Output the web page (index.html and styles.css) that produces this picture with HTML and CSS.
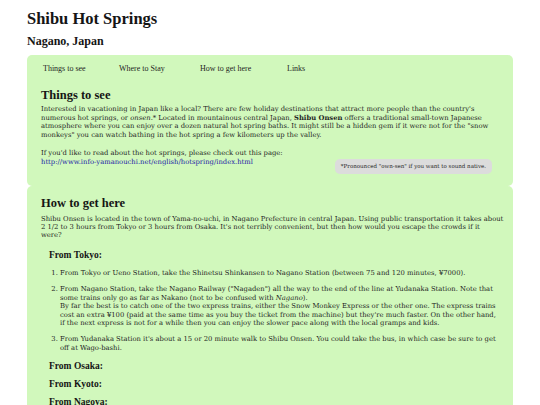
FILE: index.html
```html
<!DOCTYPE html>
<html lang="en">
<head>
<meta charset="utf-8">
<title>Shibu Hot Springs</title>
<link rel="stylesheet" href="styles.css">
</head>
<body>
<header class="page-head">
  <h1 class="title">Shibu Hot Springs</h1>
  <h2 class="subtitle">Nagano, Japan</h2>
</header>
<main class="content">
  <section class="card card-first">
    <nav class="nav">
      <a class="nav-item">Things to see</a>
      <a class="nav-item">Where to Stay</a>
      <a class="nav-item">How to get here</a>
      <a class="nav-item">Links</a>
    </nav>
    <h3 class="card-title">Things to see</h3>
    <p class="text">Interested in vacationing in Japan like a local? There are few holiday destinations that attract more people than the country's numerous hot springs, or <em>onsen</em>.* Located in mountainous central Japan, <strong>Shibu Onsen</strong> offers a traditional small-town Japanese atmosphere where you can enjoy over a dozen natural hot spring baths. It might still be a hidden gem if it were not for the "snow monkeys" you can watch bathing in the hot spring a few kilometers up the valley.</p>
    <div class="link-row">
      <p class="text">If you'd like to read about the hot springs, please check out this page:<br><a class="link" href="#">http://www.info-yamanouchi.net/english/hotspring/index.html</a></p>
      <aside class="note">*Pronounced "own-sen" if you want to sound native.</aside>
    </div>
  </section>
  <section class="card card-second">
    <h3 class="card-title">How to get here</h3>
    <p class="text intro">Shibu Onsen is located in the town of Yama-no-uchi, in Nagano Prefecture in central Japan. Using public transportation it takes about<br>2 1/2 to 3 hours from Tokyo or 3 hours from Osaka. It's not terribly convenient, but then how would you escape the crowds if it<br>were?</p>
    <h4 class="from">From Tokyo:</h4>
    <ol class="steps">
      <li>From Tokyo or Ueno Station, take the Shinetsu Shinkansen to Nagano Station (between 75 and 120 minutes, ¥7000).</li>
      <li>From Nagano Station, take the Nagano Railway ("Nagaden") all the way to the end of the line at Yudanaka Station. Note that some trains only go as far as Nakano (not to be confused with <em>Nagano</em>).<br>By far the best is to catch one of the two express trains, either the Snow Monkey Express or the other one. The express trains cost an extra ¥100 (paid at the same time as you buy the ticket from the machine) but they're much faster. On the other hand, if the next express is not for a while then you can enjoy the slower pace along with the local gramps and kids.</li>
      <li>From Yudanaka Station it's about a 15 or 20 minute walk to Shibu Onsen. You could take the bus, in which case be sure to get off at Wago-bashi.</li>
    </ol>
    <h4 class="from">From Osaka:</h4>
    <h4 class="from">From Kyoto:</h4>
    <h4 class="from">From Nagoya:</h4>
  </section>
</main>
</body>
</html>
```

FILE: styles.css
```css
html, body {
  margin: 0;
  padding: 0;
  background: #ffffff;
}
body {
  font-family: "DejaVu Serif", serif;
  color: #1e1e1e;
  padding: 9px 27px 0 27px;
}
.page-head {
  display: flex;
  flex-direction: column;
}
.title {
  margin: 0;
  font-family: "Liberation Serif", serif;
  font-size: 16.5px;
  line-height: 20px;
  font-weight: bold;
  color: #151515;
}
.subtitle {
  margin: 4px 0 0 0;
  font-family: "Liberation Serif", serif;
  font-size: 12px;
  line-height: 16px;
  font-weight: bold;
  color: #151515;
}
.content {
  margin-top: 6px;
  width: 486px;
}
.card {
  background: #d1f8bc;
  border-radius: 5px;
  padding: 0 14px 0 14px;
}
.card-first {
  padding-top: 8px;
  padding-bottom: 12px;
}
.card-second {
  padding-top: 9px;
  padding-bottom: 10px;
}
.nav {
  display: flex;
  padding-left: 2px;
  font-family: "Liberation Serif", serif;
  font-size: 8px;
  line-height: 12px;
}
.nav-item {
  color: #1e1e1e;
  text-decoration: none;
}
.nav-item:nth-child(1) { width: 76px; }
.nav-item:nth-child(2) { width: 81px; }
.nav-item:nth-child(3) { width: 87px; }
.card-title {
  margin: 12px 0 2px 0;
  font-family: "Liberation Serif", serif;
  font-size: 12.5px;
  line-height: 16px;
  font-weight: bold;
  color: #151515;
}
.card-second .card-title {
  margin: 0 0 4px 0;
}
.text {
  margin: 0 0 10px 0;
  font-size: 6.8px;
  line-height: 8.5px;
}
.intro {
  margin-right: -10px;
  line-height: 8.1px;
}
.link-row {
  display: flex;
  justify-content: space-between;
  align-items: flex-start;
}
.link-row .text {
  margin-bottom: 0;
}
.link {
  color: #1a1aa6;
  text-decoration: none;
}
.note {
  margin-top: 10px;
  margin-right: 7px;
  background: #dcdcdc;
  border-radius: 5px;
  padding: 3px 6px;
  font-size: 5.5px;
  line-height: 9px;
}
.from {
  margin: 6px 0 6px 8px;
  font-family: "Liberation Serif", serif;
  font-size: 9.5px;
  line-height: 12px;
  font-weight: bold;
  color: #151515;
}
.steps {
  margin: 8px 0 0 0;
  padding-left: 19px;
  font-size: 6.8px;
  line-height: 8.5px;
}
.steps li {
  margin-bottom: 7.5px;
}
```
